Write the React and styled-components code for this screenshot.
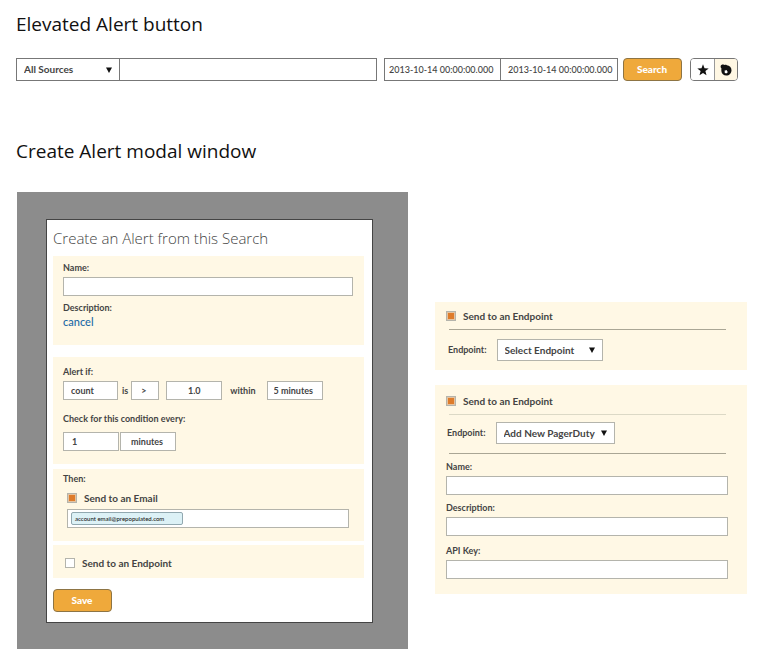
import React, { useState } from "react";
import styled, { createGlobalStyle, css } from "styled-components";

const GlobalStyle = createGlobalStyle`
  *, *::before, *::after { box-sizing: border-box; }
  body {
    margin: 0;
    background: #fff;
    color: #444;
    font-family: "Lato", "Open Sans", sans-serif;
    font-size: 9px;
    line-height: 12px;
    font-weight: 700;
  }
  input, select, button { font: inherit; color: inherit; margin: 0; }
`;

const Page = styled.main`
  padding: 12px 21px 3px 16px;
`;

const Heading = styled.h2`
  margin: 0;
  font: 400 19px/24px "Open Sans", sans-serif;
  color: #111;
`;

const SearchBar = styled.form`
  display: flex;
  margin: 22px 9px 58px 0;
  height: 23px;
`;

const SourceGroup = styled.div`
  display: flex;
  flex: 1;
  min-width: 0;
  margin-right: 7px;
`;

const DateGroup = styled.div`
  display: flex;
  margin-right: 5px;
`;

const outline = css`
  border: 1px solid ${(p) => (p.$dark ? "#777" : "#b4b4ac")};
  border-radius: 0;
  background: #fff;
  outline-offset: -1px;
`;

const TextInput = styled.input`
  ${outline}
  display: block;
  width: ${(p) => p.$width || "100%"};
  min-width: 0;
  height: ${(p) => (p.$dark ? 23 : 19)}px;
  padding: 0 ${(p) => p.$inset || 4}px;
  text-align: ${(p) => p.$align || "left"};
`;

const DateInput = styled(TextInput)`
  width: 117px;
  font-weight: 500;
  & + & { width: 118px; margin-left: -1px; padding-left: 7px; }
`;

const QueryInput = styled(TextInput)`
  flex: 1;
  margin-left: -1px;
`;

const SelectFrame = styled.span`
  display: inline-grid;
  align-items: center;
  flex: none;
  width: ${(p) => p.$width}px;
  margin-right: ${(p) => p.$after || 0}px;
  & > * { grid-area: 1 / 1; }
  & > svg { justify-self: end; margin-right: 8px; pointer-events: none; }
`;

const Select = styled.select`
  ${outline}
  appearance: none;
  width: 100%;
  height: ${(p) => p.$height || 19}px;
  padding: 0 0 ${(p) => (p.$dark ? 2 : 0)}px ${(p) => p.$inset || 7}px;
  font-size: ${(p) => (p.$height ? 10 : 9)}px;
`;

const Button = styled.button`
  flex: none;
  width: 59px;
  height: 23px;
  padding: 0 1px 2px 0;
  border: 1px solid #8d7444;
  border-radius: 4px;
  background: #efa93b;
  color: #fff;
  font-size: 10px;
  font-weight: 900;
`;

const IconGroup = styled.div`
  display: flex;
  flex: none;
  margin-left: 8px;
  overflow: hidden;
  border: 1px solid #777;
  border-radius: 4px;
`;

const IconButton = styled.button`
  display: grid;
  place-items: center;
  width: 23px;
  padding: 0;
  border: 0;
  background: ${(p) => (p.$tinted ? "#fff7e3" : "#fff")};
  color: #111;
  & + & { border-left: 1px solid #999; }
`;

const Columns = styled.div`
  display: grid;
  grid-template-columns: minmax(0, 391fr) minmax(0, 312fr);
  column-gap: 27px;
  align-items: start;
  margin: 29px 0 0 1px;
`;

const Backdrop = styled.div`
  padding: 27px 35px 26px 29px;
  background: #8c8c8c;
`;

const Modal = styled.form`
  padding: 9px 8px 10px 6px;
  border: 1px solid #444;
  background: #fff;
`;

const ModalTitle = styled.h3`
  margin: 0 0 9px;
  font: 300 15px/18px "Open Sans", sans-serif;
  color: #444;
`;

const Section = styled.section`
  padding: ${(p) => p.$pad};
  margin-bottom: ${(p) => p.$after || 0}px;
  background: #fff8e5;
`;

const Label = styled.label`
  display: block;
`;

const Field = styled.div`
  display: grid;
  gap: 3px;
  margin-bottom: ${(p) => p.$after || 0}px;
`;

const CancelLink = styled.a`
  display: block;
  color: #1b6aa5;
  font-size: 11px;
  font-weight: 500;
  line-height: 16px;
  text-decoration: none;
`;

const Inline = styled.div`
  display: flex;
  align-items: center;
  gap: ${(p) => p.$gap || 0}px;
  margin: ${(p) => p.$space || "3px 0 0"};
`;

const Word = styled.span`
  margin: 0 ${(p) => p.$right}px 0 ${(p) => p.$left}px;
`;

const CheckLabel = styled.label`
  display: flex;
  align-items: center;
  gap: 7px;
  font-size: 10px;
  line-height: 14px;
`;

const Check = styled.input`
  appearance: none;
  width: 10px;
  height: 10px;
  border: 1px solid #b4b4ac;
  background: #fff;
  &:checked {
    background: #de7c2b;
    box-shadow: inset 0 0 0 1px #e5c3a0;
  }
`;

const Recipients = styled.div`
  ${outline}
  display: flex;
  align-items: center;
  height: 19px;
  margin-left: 4px;
  padding: 0 3px;
`;

const Tag = styled.span`
  flex: none;
  width: 112px;
  height: 13px;
  padding: 0 3px;
  border: 1px solid #91a8b0;
  border-radius: 2px;
  background: #dcf1f6;
  color: #222;
  font-size: 6px;
  font-weight: 500;
  line-height: 11px;
`;

const TagEntry = styled.input`
  flex: 1;
  min-width: 0;
  height: 15px;
  border: 0;
  background: none;
`;

const SidePanels = styled.div`
  display: grid;
  gap: 15px;
  padding-top: 110px;
`;

const Rule = styled.hr`
  height: 1px;
  margin: ${(p) => p.$space};
  border: 0;
  background: ${(p) => (p.$light ? "#dcd9c6" : "#aaa695")};
`;

const SideFields = styled.div`
  display: grid;
  padding-right: 8px;
`;

const Arrow = () => (
  <svg width="6" height="6" viewBox="0 0 6 6" aria-hidden="true">
    <path d="M0 0.5h6L3 6z" fill="#111" />
  </svg>
);

const Star = () => (
  <svg width="12" height="12" viewBox="0 0 12 12" aria-hidden="true">
    <path d="M6 .3l1.500 3.900 4.200.2-3.300 2.600 1.100 4.200L6 8.900l-3.500 2.300 1.100-4.200L.3 4.400l4.200-.2z" fill="currentColor" />
  </svg>
);

const AlertMark = () => (
  <svg width="12" height="12" viewBox="0 0 12 12" aria-hidden="true">
    <path d="M.7 2C1.100.5 2.900.1 4.300 1c.9-.3 1.900-.2 2.600.2 2.600.3 4.600 2.300 4.600 5 0 3-2.200 5.400-5.200 5.400-2.700 0-4.700-1.800-4.900-4.300C1.200 6.200 1.300 5.300 1.500 4.500.7 3.800.5 2.900.7 2z" fill="currentColor" />
    <path d="M4.700 6l.9.500 1.300-.5v.8c.4.300.7.700.7 1.100 0 .8-.7 1.300-1.500 1.300s-1.500-.5-1.500-1.300c0-.4.1-.700.3-1z" fill="#fff" />
  </svg>
);

const Dropdown = ({ width, after, arrow, options, ...rest }) => (
  <SelectFrame $width={width} $after={after}>
    <Select {...rest}>
      {options.map((option) => (
        <option key={option}>{option}</option>
      ))}
    </Select>
    {arrow && <Arrow />}
  </SelectFrame>
);

const Toggle = ({ children, initial = false }) => {
  const [on, setOn] = useState(initial);
  return (
    <CheckLabel>
      <Check type="checkbox" checked={on} onChange={(e) => setOn(e.target.checked)} />
      {children}
    </CheckLabel>
  );
};

const LabelledInput = ({ id, label, after }) => (
  <Field $after={after}>
    <Label htmlFor={id}>{label}</Label>
    <TextInput id={id} type="text" />
  </Field>
);

const stop = (e) => e.preventDefault();

export default function App() {
  return (
    <>
      <GlobalStyle />
      <Page>
        <Heading>Elevated Alert button</Heading>
        <SearchBar onSubmit={stop}>
          <SourceGroup>
            <Dropdown aria-label="Source" width={104} arrow $dark $height={23} options={["All Sources"]} />
            <QueryInput $dark type="text" aria-label="Query" />
          </SourceGroup>
          <DateGroup>
            <DateInput $dark type="text" aria-label="From" defaultValue="2013-10-14 00:00:00.000" />
            <DateInput $dark type="text" aria-label="To" defaultValue="2013-10-14 00:00:00.000" />
          </DateGroup>
          <Button type="submit">Search</Button>
          <IconGroup>
            <IconButton type="button" aria-label="Favorite"><Star /></IconButton>
            <IconButton type="button" aria-label="Create alert" $tinted><AlertMark /></IconButton>
          </IconGroup>
        </SearchBar>

        <Heading>Create Alert modal window</Heading>
        <Columns>
          <Backdrop>
            <Modal onSubmit={stop}>
              <ModalTitle>Create an Alert from this Search</ModalTitle>

              <Section $pad="6px 11px 15px 10px" $after={12}>
                <LabelledInput id="alert-name" label="Name:" after={6} />
                <Label as="div">Description:</Label>
                <CancelLink href="#cancel">cancel</CancelLink>
              </Section>

              <Section $pad="9px 10px 13px 10px" $after={5}>
                <Label as="div">Alert if:</Label>
                <Inline>
                  <Dropdown aria-label="Measure" width={55} options={["count"]} />
                  <Word $left={4} $right={3}>is</Word>
                  <Dropdown aria-label="Comparison" width={28} after={7} $inset={9} options={[">"]} />
                  <TextInput aria-label="Threshold" $width="56px" $align="center" defaultValue="1.0" />
                  <Word $left={8} $right={11}>within</Word>
                  <Dropdown aria-label="Window" width={56} $inset={6} options={["5 minutes"]} />
                </Inline>
                <Inline $space="13px 0 7px">Check for this condition every:</Inline>
                <Inline $gap={1}>
                  <TextInput aria-label="Interval" $width="56px" $inset={8} defaultValue="1" />
                  <Dropdown aria-label="Interval unit" width={56} $inset={10} options={["minutes"]} />
                </Inline>
              </Section>

              <Section $pad="4px 15px 13px 10px" $after={4}>
                <Label as="div">Then:</Label>
                <Inline $space="6px 0 4px 4px"><Toggle initial>Send to an Email</Toggle></Inline>
                <Recipients>
                  <Tag>account email@prepopulated.com</Tag>
                  <TagEntry type="text" aria-label="Add recipient" />
                </Recipients>
              </Section>

              <Section $pad="11px 12px 8px" $after={11}>
                <Toggle>Send to an Endpoint</Toggle>
              </Section>

              <Button type="submit">Save</Button>
            </Modal>
          </Backdrop>

          <SidePanels>
            <Section $pad="7px 11px 9px">
              <Toggle initial>Send to an Endpoint</Toggle>
              <Rule $space="6px 10px 9px 3px" />
              <Inline $gap={10} $space="0 0 0 2px">
                <Label htmlFor="endpoint-a">Endpoint:</Label>
                <Dropdown id="endpoint-a" width={106} arrow $height={22} options={["Select Endpoint"]} />
              </Inline>
            </Section>

            <Section $pad="9px 11px 15px">
              <Toggle initial>Send to an Endpoint</Toggle>
              <Rule $light $space="6px 10px 7px 3px" />
              <Inline $gap={10} $space="0 0 0 1px">
                <Label htmlFor="endpoint-b">Endpoint:</Label>
                <Dropdown id="endpoint-b" width={119} arrow $height={22} options={["Add New PagerDuty"]} />
              </Inline>
              <Rule $space="9px 10px 7px 3px" />
              <SideFields>
                <LabelledInput id="duty-name" label="Name:" after={7} />
                <LabelledInput id="duty-description" label="Description:" after={9} />
                <LabelledInput id="duty-key" label="API Key:" />
              </SideFields>
            </Section>
          </SidePanels>
        </Columns>
      </Page>
    </>
  );
}
